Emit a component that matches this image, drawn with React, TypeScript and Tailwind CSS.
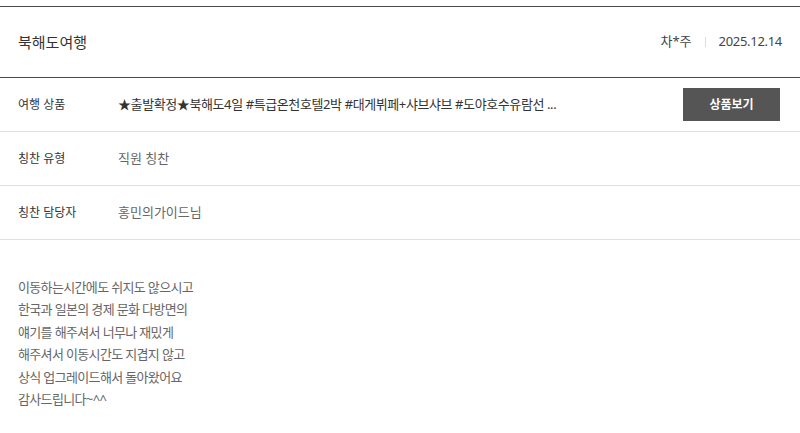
import React from "react";

const font = { fontFamily: '"Noto Sans", "Noto Sans CJK KR", sans-serif' };

export default function App() {
  const rows = [
    { label: "칭찬 유형", value: "직원 칭찬" },
    { label: "칭찬 담당자", value: "홍민의가이드님" },
  ];
  const lines = [
    "이동하는시간에도 쉬지도 않으시고",
    "한국과 일본의 경제 문화 다방면의",
    "얘기를 해주셔서 너무나 재밌게",
    "해주셔서 이동시간도 지겹지 않고",
    "상식 업그레이드해서 돌아왔어요",
    "감사드립니다~^^",
  ];
  return (
    <div className="w-[800px] h-[433px] bg-white overflow-hidden pt-[6px]" style={font}>
      <div className="border-t border-b border-[#4a4a4a] h-[72px] flex items-center justify-between pl-[18px] pr-[18px]">
        <div className="text-[15px] text-[#333]">북해도여행</div>
        <div className="flex items-center text-[13px] text-[#444]">
          <span>차*주</span>
          <span className="w-px h-[10px] bg-[#ddd] mx-[13px]"></span>
          <span className="tracking-[-0.3px]">2025.12.14</span>
        </div>
      </div>
      <div className="h-[54px] border-b border-[#e0e0e0] flex items-center pl-[18px] pr-[20px]">
        <div className="w-[100px] text-[12px] text-[#333]">여행 상품</div>
        <div className="flex-1 text-[13px] text-[#333] tracking-[-0.4px]">
          ★출발확정★북해도4일 #특급온천호텔2박 #대게뷔페+샤브샤브 #도야호수유람선 ...
        </div>
        <button className="w-[97px] h-[33px] bg-[#555] text-white text-[12px] font-semibold">
          상품보기
        </button>
      </div>
      {rows.map((r) => (
        <div key={r.label} className="h-[54px] border-b border-[#e0e0e0] flex items-center pl-[18px]">
          <div className="w-[100px] text-[12px] text-[#333]">{r.label}</div>
          <div className="text-[13px] text-[#666]">{r.value}</div>
        </div>
      ))}
      <div className="pt-[36px] pl-[18px] text-[13px] leading-[22.4px] text-[#666] tracking-[-0.65px]">
        {lines.map((l) => (
          <div key={l}>{l}</div>
        ))}
      </div>
    </div>
  );
}
